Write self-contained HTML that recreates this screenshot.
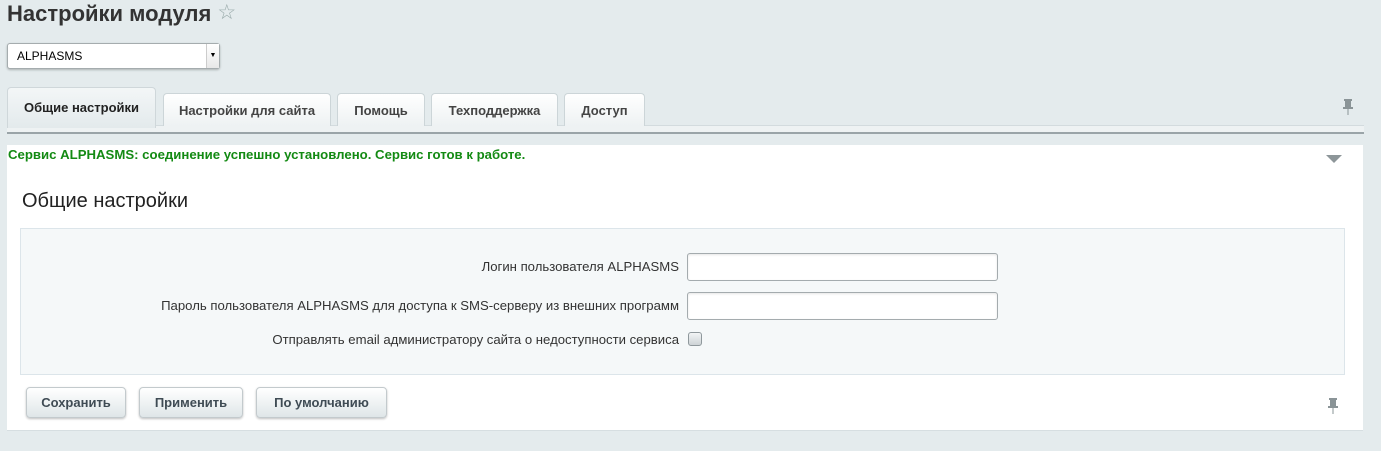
<!DOCTYPE html>
<html><head><meta charset="utf-8"><style>
body{margin:0;width:1381px;height:451px;background:#e4ebed;font-family:"Liberation Sans",Arial,sans-serif;position:relative;overflow:hidden}
.a{position:absolute}
h1{position:absolute;left:7px;top:0;margin:0;font-size:22px;font-weight:bold;color:#333;line-height:28px}
.sel{left:7px;top:43px;width:211px;height:24px;background:#fff;border:1px solid #a5acae;border-radius:3px;box-shadow:0 1px 2px rgba(0,0,0,.25);font-size:12px;line-height:24px}
.tab{position:absolute;top:93px;height:32px;border:1px solid #ccd5d8;border-bottom:none;border-radius:4px 4px 0 0;background:linear-gradient(#fff,#eef2f3);font-size:13px;font-weight:bold;color:#444;text-align:center;line-height:33px}
.lbl{position:absolute;right:702px;font-size:13.15px;color:#333}
.inp{position:absolute;left:687px;width:309px;height:26px;background:#fff;border:1px solid #a4abae;border-radius:3px;box-shadow:inset 0 1px 2px rgba(0,0,0,.1)}
.btn{position:absolute;top:387px;height:29px;border:1px solid #c3cacd;border-radius:4px;background:linear-gradient(#fff,#dfe6e8);box-shadow:0 1px 2px rgba(0,0,0,.25);font-size:13px;font-weight:bold;color:#3f4b54;text-align:center;line-height:29px}
</style></head><body>
<h1>Настройки модуля <span style="color:#9aa;font-size:21px;font-weight:normal;position:relative;top:-2px">☆</span></h1>
<div class="a sel"><span style="margin-left:9px">ALPHASMS</span><div class="a" style="right:0;top:0;width:12px;height:24px;border-left:1px solid #ccc;background:linear-gradient(#fff,#e8e8e8);font-size:7px;text-align:center;line-height:24px">▼</div></div>
<div class="a" style="left:7px;top:125px;width:1357px;height:6px;background:#eef2f3;border-top:1px solid #d3dbde;border-bottom:2px solid #9aa4a8"></div>
<div class="tab" style="left:7px;top:87px;width:147px;height:40px;line-height:40px;background:linear-gradient(#f3f6f7,#e3eaec);color:#222;border-color:#cfd7da">Общие настройки</div>
<div class="tab" style="left:163px;width:166px">Настройки для сайта</div>
<div class="tab" style="left:337px;width:86px">Помощь</div>
<div class="tab" style="left:431px;width:125px">Техподдержка</div>
<div class="tab" style="left:564px;width:79px">Доступ</div>
<div class="a" style="left:1342px;top:98px">
<svg width="12" height="18"><rect x="2" y="1" width="8" height="2" fill="#8a9497"/><rect x="3" y="3" width="6" height="7" fill="#8a9497"/><rect x="1" y="9" width="10" height="2" fill="#8a9497"/><rect x="5.5" y="11" width="1" height="6" fill="#8a9497"/></svg></div>
<div class="a" style="left:7px;top:145px;width:1356px;height:285px;background:#fff;border-bottom:1px solid #d6dee1"></div>
<div class="a" style="left:8px;top:147px;font-size:13.2px;font-weight:bold;color:#138a13">Сервис ALPHASMS: соединение успешно установлено. Сервис готов к работе.</div>
<div class="a" style="left:1326px;top:155px;width:0;height:0;border-left:8px solid transparent;border-right:8px solid transparent;border-top:8px solid #8d9699"></div>
<div class="a" style="left:22px;top:190px;font-size:20px;color:#222">Общие настройки</div>
<div class="a" style="left:20px;top:228px;width:1323px;height:145px;background:#f5f8f9;border:1px solid #dce5ea"></div>
<div class="lbl" style="top:259px">Логин пользователя ALPHASMS</div>
<div class="inp" style="top:253px"></div>
<div class="lbl" style="top:298px">Пароль пользователя ALPHASMS для доступа к SMS-серверу из внешних программ</div>
<div class="inp" style="top:292px"></div>
<div class="lbl" style="top:332px">Отправлять email администратору сайта о недоступности сервиса</div>
<div class="a" style="left:688px;top:332px;width:12px;height:12px;border:1px solid #8f989c;border-radius:3px;background:linear-gradient(#f2f4f5,#cdd3d6)"></div>
<div class="btn" style="left:26px;width:98px">Сохранить</div>
<div class="btn" style="left:139px;width:102px">Применить</div>
<div class="btn" style="left:256px;width:129px">По умолчанию</div>
<div class="a" style="left:1327px;top:397px">
<svg width="12" height="18"><rect x="2" y="1" width="8" height="2" fill="#8a9497"/><rect x="3" y="3" width="6" height="7" fill="#8a9497"/><rect x="1" y="9" width="10" height="2" fill="#8a9497"/><rect x="5.5" y="11" width="1" height="6" fill="#8a9497"/></svg></div>
</body></html>
